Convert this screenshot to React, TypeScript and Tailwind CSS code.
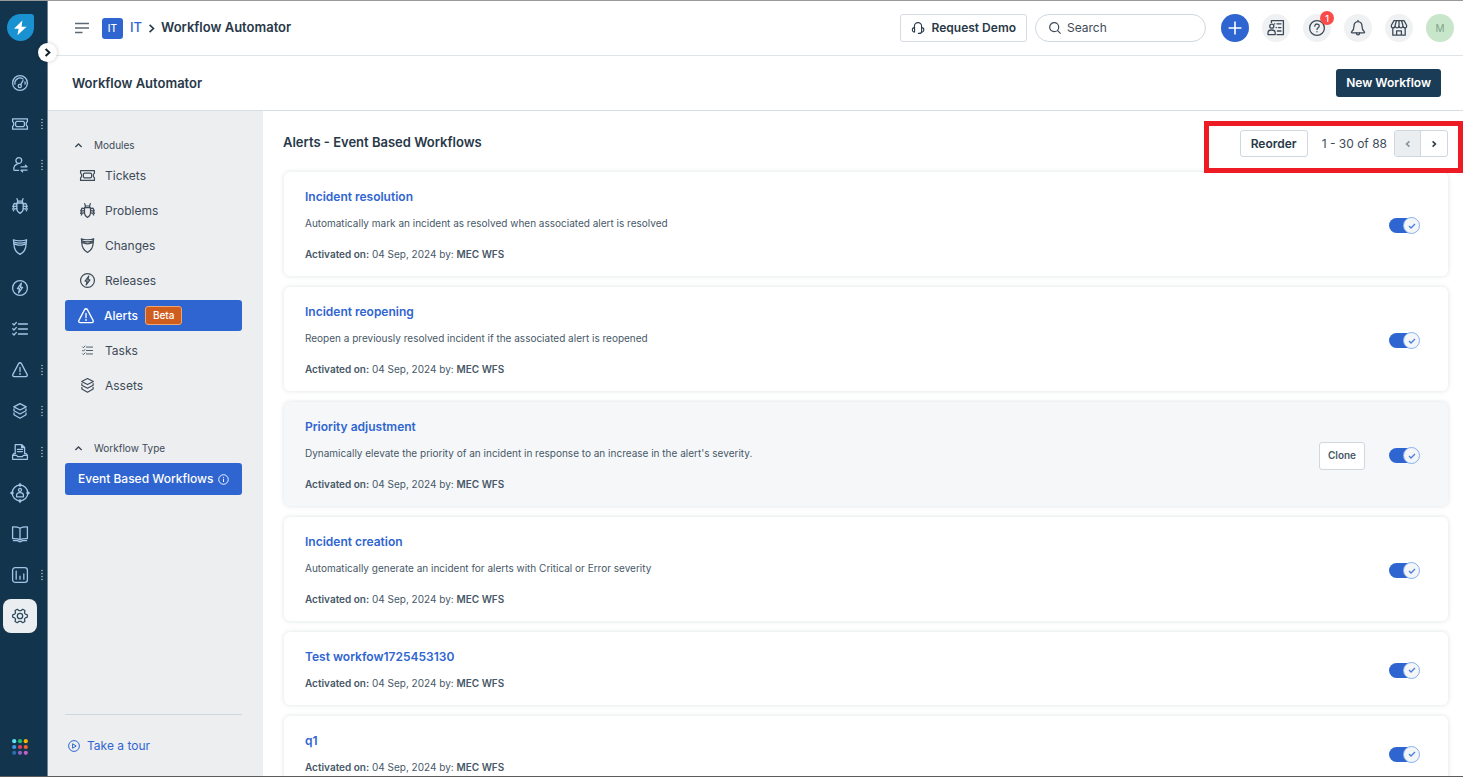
import { useState } from 'react';
import type { ReactNode } from 'react';

type IconName =
  | 'gauge'
  | 'ticket'
  | 'requester'
  | 'bug'
  | 'change'
  | 'release'
  | 'tasks'
  | 'alert'
  | 'layers'
  | 'purchase'
  | 'oncall'
  | 'book'
  | 'chart'
  | 'gear';

const ICONS: Record<IconName, ReactNode> = {
  gauge: (
    <>
      <circle cx="8" cy="8" r="7.4" />
      <path d="M3 9.2A5.1 5.1 0 0 1 11 4M13 6.8a5.2 5.2 0 0 1 0 2.4" />
      <circle cx="7.8" cy="11" r="1.6" />
      <path d="M8.6 9.6l2.4-4" />
    </>
  ),
  ticket: (
    <>
      <path d="M.6 2.8h14.8v2.8c-1.6.6-1.6 4.2 0 4.8v2.8H.6v-2.8c1.6-.6 1.6-4.2 0-4.8z" />
      <path d="M4.6 5.4h6.8l1 1v3.2l-1 1H4.6l-1-1V6.4z" />
    </>
  ),
  requester: (
    <>
      <circle cx="6.8" cy="3.6" r="2.9" />
      <path d="M5.2 7.2c-2.4.8-3.4 2.6-3.4 5 0 .8.4 1.2 1.2 1.2h3.6" />
      <path d="M9 9.8h6M13.4 8.2L15 9.8M15 13.2H9M10.6 14.8L9 13.2" />
    </>
  ),
  bug: (
    <>
      <path d="M4.8 5h6.4v6c0 1.8-1.6 3.4-3.2 4.4-1.6-1-3.2-2.6-3.2-4.4z" />
      <path d="M5.6 5V3.2h4.8V5M5.8 3.2L5 .6M10.2 3.2l.8-2.6" />
      <path d="M4.6 6L2.2 5.4.8 8.4M4.6 8.2l-2.4.2-1.6 2.6M4.8 10.6l-2.4.2-1 2M11.4 6l2.4-.6 1.4 3M11.4 8.2l2.4.2 1.6 2.6M11.2 10.6l2.4.2 1 2" />
    </>
  ),
  change: (
    <>
      <path d="M1.4.8C4 2.2 12 2.2 14.6.8c-.2 1.6-.6 2.8-.6 4.6 0 5-2.4 8-6 10-3.6-2-6-5-6-10C2 3.6 1.6 2.4 1.4.8z" />
      <path d="M1.8 3c3.6 1.4 8.8 1.4 12.4 0M2 5c2.2 0 3 1.2 6 1.2S11.8 5 14 5" />
    </>
  ),
  release: (
    <>
      <circle cx="8" cy="8" r="7.4" />
      <path d="M9.4 3.2L5.4 8.6h2.2l-1 4.2 4-5.4H8.4z" />
    </>
  ),
  tasks: (
    <path d="M6.4 3h9M6.4 8h9M6.4 13h9M.8 2.8L2 4l2.4-2.6M.8 7.8L2 9l2.4-2.6M.8 12.8L2 14l2.4-2.6" />
  ),
  alert: (
    <>
      <path d="M6.6 1.6a1.6 1.6 0 0 1 2.8 0l5.8 11a1.4 1.4 0 0 1-1.2 2H2a1.4 1.4 0 0 1-1.2-2z" />
      <path d="M8 5.4v4.2M8 11.4v1" />
    </>
  ),
  layers: (
    <>
      <path d="M8 .6l6.2 3.2L8 7 1.8 3.8z" />
      <path d="M2 6v1.8l6 3.2 6-3.2V6M2 10v1.8l6 3.4 6-3.4V10" />
    </>
  ),
  purchase: (
    <>
      <path d="M3.2 9.6V.7h6.6l2.8 2.8v6.1M9.6.9v2.8h2.8" />
      <path d="M5.4 5.4h5M5.4 7.6h5M3.2 9.6H1.8L.6 11.4v3.9h14.8v-3.9l-1.2-1.8h-1.6M.8 11.4h3.8l1 1.2h4.8l1-1.2h3.8" />
    </>
  ),
  oncall: (
    <>
      <circle cx="8" cy="8" r="7.8" />
      <circle cx="8" cy="4.9" r="1.5" />
      <path d="M4.6 11.8V10c0-1.6 1.4-2.4 3.4-2.4s3.4.8 3.4 2.4v1.8z" />
      <path
        d="M8-2.2L9.8 0 8 2.2 6.2 0zM8 13.8L9.8 16 8 18.2 6.2 16zM-2.2 8L0 6.2 2.2 8 0 9.8zM13.8 8L16 6.2 18.2 8 16 9.8z"
        fill="currentColor"
        stroke="none"
      />
    </>
  ),
  book: (
    <>
      <path d="M8 2.2C6 1 3.4.8.6.9v11.7c2.8-.1 5.4 0 7.4 1 2-1 4.6-1.1 7.4-1V.9C12.6.8 10 1 8 2.2zM8 2.2v11.2" />
      <path d="M1.4 14.6h4.2l1.2.9h2.4l1.2-.9h4.2" />
    </>
  ),
  chart: (
    <>
      <rect x=".6" y=".6" width="14.8" height="14.8" rx="2.6" />
      <path d="M4.2 4.2v8M8 9.2v3M11.8 7v5.2" />
    </>
  ),
  gear: (
    <>
      <path d="M15.3 6.8v2.4l-2.1.8-.7 1.2.4 2.3-2.2 1.2-1.8-1.4H7.1l-1.8 1.4-2.2-1.2.4-2.3-.7-1.2-2.1-.8V6.8L2.8 6l.7-1.2-.4-2.3 2.2-1.2 1.8 1.4h1.8l1.8-1.4 2.2 1.2-.4 2.3.7 1.2z" />
      <circle cx="8" cy="8" r="2.7" />
    </>
  ),
};

function Icon({ name, className = 'size-4' }: { name: IconName; className?: string }) {
  return (
    <svg
      viewBox="0 0 16 16"
      className={`shrink-0 overflow-visible ${className}`}
      fill="none"
      stroke="currentColor"
      strokeWidth={1.3}
      strokeLinecap="round"
      strokeLinejoin="round"
      aria-hidden="true"
    >
      {ICONS[name]}
    </svg>
  );
}

interface ChevronProps {
  direction: 'left' | 'right' | 'up';
  className?: string;
  strokeWidth?: number;
}

function Chevron({ direction, className = 'size-2', strokeWidth = 1.6 }: ChevronProps) {
  const paths = { left: 'M5.4 1.4L2.6 4l2.8 2.6', right: 'M2.6 1.4L5.4 4 2.6 6.6', up: 'M1.2 5.4L4 2.6l2.8 2.8' };
  return (
    <svg viewBox="0 0 8 8" className={`shrink-0 ${className}`} fill="none" stroke="currentColor" strokeWidth={strokeWidth} aria-hidden="true">
      <path d={paths[direction]} />
    </svg>
  );
}

const RAIL_ITEMS: { icon: IconName; label: string; more?: boolean; active?: boolean }[] = [
  { icon: 'gauge', label: 'Dashboard' },
  { icon: 'ticket', label: 'Tickets', more: true },
  { icon: 'requester', label: 'Requesters', more: true },
  { icon: 'bug', label: 'Problems' },
  { icon: 'change', label: 'Changes' },
  { icon: 'release', label: 'Releases' },
  { icon: 'tasks', label: 'Tasks' },
  { icon: 'alert', label: 'Alerts', more: true },
  { icon: 'layers', label: 'Assets', more: true },
  { icon: 'purchase', label: 'Purchase orders', more: true },
  { icon: 'oncall', label: 'On-call' },
  { icon: 'book', label: 'Solutions' },
  { icon: 'chart', label: 'Analytics', more: true },
  { icon: 'gear', label: 'Admin', active: true },
];

const APP_DOTS = ['#5fe3f0', '#27b86c', '#f7b500', '#3f9be8', '#e0405a', '#f0622d', '#2a6fa8', '#8d62c9', '#c45fc4'];

function Rail() {
  return (
    <nav className="relative flex w-12 shrink-0 flex-col border-r border-[#6f8596] bg-[#12344d]" aria-label="Main">
      <a href="#home" className="mt-[13px] ml-[7px] block size-[27px]" aria-label="Home">
        <svg viewBox="0 0 27 27" className="size-[27px]" aria-hidden="true">
          <path d="M13.5 0H24a3 3 0 0 1 3 3v10.5A13.5 13.5 0 1 1 13.5 0z" fill="#1a91d0" />
          <path d="M15.4 6.6L7 14.8h4.6l-1.2 6.4 9.2-8.4h-5z" fill="#fff" />
        </svg>
      </a>
      <button
        type="button"
        aria-label="Expand navigation"
        className="absolute top-[42px] left-[38px] z-10 flex size-[19px] items-center justify-center rounded-full bg-white text-[#12202c] shadow-[0_0_4px_rgba(0,0,0,0.2)]"
      >
        <Chevron direction="right" className="size-[11px]" strokeWidth={1.4} />
      </button>
      <ul className="mt-[25px] flex flex-col gap-[7px]">
        {RAIL_ITEMS.map((item) => (
          <li key={item.label} className="flex h-[34px] items-center pl-[3px]">
            <a
              href={`#${item.icon}`}
              aria-label={item.label}
              className={`flex size-[34px] items-center justify-center rounded-lg ${
                item.active ? 'bg-[#ebeef0] text-[#2c4a60]' : 'text-[#a5c5e6]'
              }`}
            >
              <Icon name={item.icon} />
            </a>
            {item.more && (
              <svg viewBox="0 0 2 12" className="ml-1 h-3 w-0.5" fill="#a3b8c9" aria-hidden="true">
                <circle cx="1" cy="1.5" r="0.8" />
                <circle cx="1" cy="4.5" r="0.8" />
                <circle cx="1" cy="7.5" r="0.8" />
                <circle cx="1" cy="10.5" r="0.8" />
              </svg>
            )}
          </li>
        ))}
      </ul>
      <button type="button" aria-label="Switch app" className="mt-auto mb-[21px] ml-3 size-4">
        <svg viewBox="0 0 16 16" className="size-4" aria-hidden="true">
          {APP_DOTS.map((fill, i) => (
            <circle key={fill} cx={2.2 + (i % 3) * 5.8} cy={2.2 + Math.floor(i / 3) * 5.8} r="2.1" fill={fill} />
          ))}
        </svg>
      </button>
    </nav>
  );
}

function RoundButton({ label, badge, children }: { label: string; badge?: number; children: ReactNode }) {
  return (
    <button
      type="button"
      aria-label={label}
      className="relative flex size-7 items-center justify-center rounded-full bg-[#f0f1f3] text-[#3d4b58]"
    >
      <svg
        viewBox="0 0 18 18"
        className="size-[18px]"
        fill="none"
        stroke="currentColor"
        strokeWidth={1.3}
        strokeLinecap="round"
        strokeLinejoin="round"
        aria-hidden="true"
      >
        {children}
      </svg>
      {badge && (
        <span className="absolute -top-[3px] -right-[3px] flex size-3.5 items-center justify-center rounded-full bg-[#fa4b4b] text-[9px] leading-none font-medium text-white">
          {badge}
        </span>
      )}
    </button>
  );
}

function TopBar() {
  return (
    <header className="flex h-[55px] shrink-0 items-center border-b border-[#dfe4e9] bg-white pr-[9px] pl-[27px]">
      <button type="button" aria-label="Toggle menu" className="text-[#5d6872]">
        <svg viewBox="0 0 14 12" className="h-3 w-3.5" stroke="currentColor" strokeWidth={1.4} aria-hidden="true">
          <path d="M0 1.5h14M0 6h14M0 10.5h7.5" />
        </svg>
      </button>
      <span className="ml-[13px] flex size-[21px] items-center justify-center rounded-[3px] bg-[#2f65d0] text-[10px] font-medium text-white">IT</span>
      <a href="#it" className="ml-[7px] text-[13px] font-medium text-[#2f65d0]">IT</a>
      <Chevron direction="right" className="mx-1 size-[11px] text-[#283848]" strokeWidth={1.2} />
      <span className="text-[13px] font-semibold text-[#283848]">Workflow Automator</span>

      <div className="ml-auto flex items-center">
        <button
          type="button"
          className="flex h-7 items-center rounded-[3px] border border-[#d5dbe1] bg-white px-2.5 text-xs font-semibold text-[#283848]"
        >
          <svg viewBox="0 0 14 14" className="mr-[7px] size-3.5" fill="none" stroke="currentColor" strokeWidth={1.1} strokeLinecap="round" aria-hidden="true">
            <path d="M3.4 6.6V5.2a3.6 3.6 0 0 1 7.2 0v5.2c0 1.4-.8 2-2.6 2H7.4" />
            <path d="M3.6 6.6c-3 0-3 4.4 0 4.4zM10.6 6.6c3 0 3 4.4 0 4.4" />
          </svg>
          Request Demo
        </button>
        <label className="ml-2 flex h-7 w-[171px] items-center rounded-full border border-[#cfd7df] bg-white pl-[13px] text-[#3d4b58]">
          <svg viewBox="0 0 12 12" className="mr-1.5 size-3 shrink-0" fill="none" stroke="currentColor" strokeWidth={1.2} aria-hidden="true">
            <circle cx="5.2" cy="5.2" r="4.5" />
            <path d="M8.4 8.4l3.2 3.2" />
          </svg>
          <input type="search" aria-label="Search" placeholder="Search" className="w-full min-w-0 bg-transparent text-xs outline-none placeholder:text-[#3d4b58]" />
        </label>
        <div className="ml-[15px] flex items-center gap-[13px]">
          <button type="button" aria-label="Create new" className="flex size-7 items-center justify-center rounded-full bg-[#2f65d0] text-white">
            <svg viewBox="0 0 14 14" className="size-3.5" stroke="currentColor" strokeWidth={1.6} aria-hidden="true">
              <path d="M7 .6v12.8M.6 7h12.8" />
            </svg>
          </button>
          <RoundButton label="Directory">
            <path d="M4.4 3.4V1.6h12v14H10" />
            <circle cx="4.8" cy="7.2" r="2" />
            <path d="M1 15.6v-1.8c0-1.8 1.6-2.8 3.6-2.8s3.6 1 3.6 2.8v1.8zM7.4 4.8h.4M10 4.8h4M9 8.6h.4M11.4 8.6H14M10.4 12H14" />
          </RoundButton>
          <RoundButton label="Help" badge={1}>
            <circle cx="9" cy="9" r="7.4" />
            <path d="M6.8 7.2c0-3 4.6-2.8 4.4 0C11.2 8.8 9 8.8 9 10.4M9 12.6v.2" />
          </RoundButton>
          <RoundButton label="Notifications">
            <path d="M9 1.4v1.2M9 2.6C6.400 2.600 5 4.600 5 7c0 3.400-1 4.600-2.200 5.600-.6.6-.4 1.200.4 1.200h11.600c.8 0 1-.6.4-1.200C14 11.600 13 10.400 13 7c0-2.400-1.400-4.400-4-4.400z" />
            <path d="M7.4 14c0 2.6 3.2 2.6 3.2 0" />
          </RoundButton>
          <RoundButton label="Marketplace">
            <path d="M4 1.6h10l2.6 4.6v1.2c0 2-2.8 2-3.8 0-.6 2-3.2 2-3.8 0-.6 2-3.2 2-3.8 0-1 2-3.8 2-3.8 0V6.2z" />
            <path d="M6.4 1.8L5.2 6v1.4M11.6 1.8L12.8 6v1.4M9 1.8v5.6M2.8 9.2v7h12.4v-7M6.6 16v-4.2h4.8V16" />
          </RoundButton>
          <button type="button" aria-label="Profile" className="flex size-7 items-center justify-center rounded-full bg-[#c8e6c9] text-[10px] text-[#7fa58a]">
            M
          </button>
        </div>
      </div>
    </header>
  );
}

const MODULES: { icon: IconName; label: string }[] = [
  { icon: 'ticket', label: 'Tickets' },
  { icon: 'bug', label: 'Problems' },
  { icon: 'change', label: 'Changes' },
  { icon: 'release', label: 'Releases' },
  { icon: 'alert', label: 'Alerts' },
  { icon: 'tasks', label: 'Tasks' },
  { icon: 'layers', label: 'Assets' },
];

function SectionToggle({ children }: { children: ReactNode }) {
  return (
    <button type="button" aria-expanded="true" className="ml-[9px] flex h-4 items-center gap-[11px] text-[10px] text-[#3d4b58]">
      <Chevron direction="up" className="size-[9px]" strokeWidth={1.2} />
      {children}
    </button>
  );
}

function Sidebar() {
  const [selected, setSelected] = useState('Alerts');

  return (
    <aside className="flex w-[215px] shrink-0 flex-col bg-[#edeef0] pt-[26px] pr-[21px] pb-[21px] pl-[17px]">
      <SectionToggle>Modules</SectionToggle>
      <ul className="mt-[7px] flex flex-col gap-1">
        {MODULES.map(({ icon, label }) => {
          const active = label === selected;
          return (
            <li key={label}>
              <button
                type="button"
                onClick={() => setSelected(label)}
                className={`flex h-[31px] w-full items-center gap-2.5 rounded-[3px] text-xs ${
                  active ? 'bg-[#2f65d0] pl-[13px] font-medium text-white' : 'pl-3.5 text-[#3d4b58]'
                }`}
              >
                <span className="flex w-4 justify-center">
                  <Icon name={icon} className={icon === 'tasks' ? 'size-[11px]' : active ? 'size-4' : 'size-[15px]'} />
                </span>
                {label}
                {label === 'Alerts' && (
                  <span className="-ml-[3px] flex h-[19px] items-center rounded-[3px] border border-[#f0a572] bg-[#cf5d1e] px-[7px] text-[10px] font-medium text-white">
                    Beta
                  </span>
                )}
              </button>
            </li>
          );
        })}
      </ul>
      <div className="mt-[39px]">
        <SectionToggle>Workflow Type</SectionToggle>
      </div>
      <button type="button" className="mt-[7px] flex h-8 items-center gap-1 rounded-[3px] bg-[#2f65d0] pl-[13px] text-xs font-medium text-white">
        Event Based Workflows
        <svg viewBox="0 0 12 12" className="size-[11px] shrink-0" fill="none" stroke="currentColor" aria-hidden="true">
          <circle cx="6" cy="6" r="5.2" />
          <path d="M6 5.2v3.6M6 3.2v1" />
        </svg>
      </button>
      <div className="mt-auto border-t border-[#cfd7df] pt-[22px]">
        <a href="#tour" className="ml-[3px] flex items-center gap-[7px] text-xs leading-[18px] text-[#2f65d0]">
          <svg viewBox="0 0 12 12" className="size-3" fill="none" stroke="currentColor" aria-hidden="true">
            <circle cx="6" cy="6" r="5.4" />
            <path d="M4.6 3.8L8.2 6 4.6 8.2z" />
          </svg>
          Take a tour
        </a>
      </div>
    </aside>
  );
}

interface Workflow {
  name: string;
  description?: string;
  hovered?: boolean;
}

const WORKFLOWS: Workflow[] = [
  { name: 'Incident resolution', description: 'Automatically mark an incident as resolved when associated alert is resolved' },
  { name: 'Incident reopening', description: 'Reopen a previously resolved incident if the associated alert is reopened' },
  {
    name: 'Priority adjustment',
    description: "Dynamically elevate the priority of an incident in response to an increase in the alert's severity.",
    hovered: true,
  },
  { name: 'Incident creation', description: 'Automatically generate an incident for alerts with Critical or Error severity' },
  { name: 'Test workfow1725453130' },
  { name: 'q1' },
];

function Toggle({ label }: { label: string }) {
  return (
    <label className="relative flex h-[17px] w-[31px] cursor-pointer items-center">
      <input type="checkbox" defaultChecked aria-label={`Enable ${label}`} className="peer sr-only" />
      <span className="h-[15px] w-[29px] rounded-full bg-[#9aa6b1] peer-checked:bg-[#2f65d0]" />
      <span className="absolute left-0 flex size-[17px] items-center justify-center rounded-full border border-[#85b0f2] bg-[#f3f5f7] text-[#4a7ddb] peer-checked:right-0 peer-checked:left-auto">
        <svg viewBox="0 0 8 8" className="size-2" fill="none" stroke="currentColor" strokeWidth={1.3} aria-hidden="true">
          <path d="M1 4l2 2 4-4" />
        </svg>
      </span>
    </label>
  );
}

function WorkflowCard({ workflow }: { workflow: Workflow }) {
  return (
    <li
      className={`flex items-center rounded-md pt-[17px] pr-7 pb-3.5 pl-[21px] shadow-[0_0_5px_rgba(24,50,71,0.14)] ${
        workflow.hovered ? 'bg-[#f5f7f9]' : 'bg-white'
      }`}
    >
      <div className="min-w-0 flex-1">
        <h3 className="text-xs leading-4 font-semibold">
          <a href="#workflow" className="text-[#2f65d0]">{workflow.name}</a>
        </h3>
        {workflow.description && <p className="mt-2.5 mb-[15px] text-[10px] leading-4 text-[#475867]">{workflow.description}</p>}
        <p className={`text-[10px] leading-4 text-[#475867] ${workflow.description ? '' : 'mt-2.5'}`}>
          <span className="font-semibold">Activated on:</span> 04 Sep, 2024 by: <span className="font-semibold">MEC WFS</span>
        </p>
      </div>
      {workflow.hovered && (
        <button type="button" className="mr-6 h-7 rounded-[3px] border border-[#cfd7df] bg-white px-2 text-[10px] font-semibold text-[#475867]">
          Clone
        </button>
      )}
      <Toggle label={workflow.name} />
    </li>
  );
}

export default function App() {
  return (
    <div className="relative flex h-screen overflow-hidden border-t border-b border-t-[#999999] border-b-[#5c5c5c] bg-white font-[Inter,'Liberation_Sans',sans-serif] text-[#283848]">
      <Rail />
      <div className="flex min-w-0 flex-1 flex-col">
        <TopBar />
        <div className="flex h-[55px] shrink-0 items-center justify-between border-b border-[#d5dde5] pr-[22px] pl-6">
          <h1 className="pt-px text-[13px] font-semibold">Workflow Automator</h1>
          <button type="button" className="h-7 rounded-[3px] bg-[#1b3c56] px-2.5 text-xs font-semibold text-white">
            New Workflow
          </button>
        </div>
        <div className="flex min-h-0 flex-1">
          <Sidebar />
          <main className="min-w-0 flex-1 overflow-hidden pt-[19px] pr-[15px] pl-5">
            <div className="relative flex h-[27px] items-center">
              <h2 className="self-start text-[13px] leading-6 font-semibold">Alerts - Event Based Workflows</h2>
              <button type="button" className="ml-auto h-[27px] rounded-[3px] border border-[#cfd7df] px-2.5 text-xs font-semibold">
                Reorder
              </button>
              <span className="mr-[7px] ml-3.5 text-xs text-[#3d4b58]">1 - 30 of 88</span>
              <div className="flex h-[27px] overflow-hidden rounded-[3px] border border-[#cfd7df]">
                <button type="button" disabled aria-label="Previous page" className="flex w-[26px] items-center justify-center border-r border-[#cfd7df] bg-[#ebeef0] text-[#8392a0]">
                  <Chevron direction="left" />
                </button>
                <button type="button" aria-label="Next page" className="flex w-[26px] items-center justify-center">
                  <Chevron direction="right" />
                </button>
              </div>
              <div className="pointer-events-none absolute -top-[9px] -right-[15px] h-[52px] w-[259px] border-5 border-[#ed1c24]" />
            </div>
            <ul className="mt-[15px] flex flex-col gap-[11px] pl-px">
              {WORKFLOWS.map((workflow) => (
                <WorkflowCard key={workflow.name} workflow={workflow} />
              ))}
            </ul>
          </main>
        </div>
      </div>
    </div>
  );
}
